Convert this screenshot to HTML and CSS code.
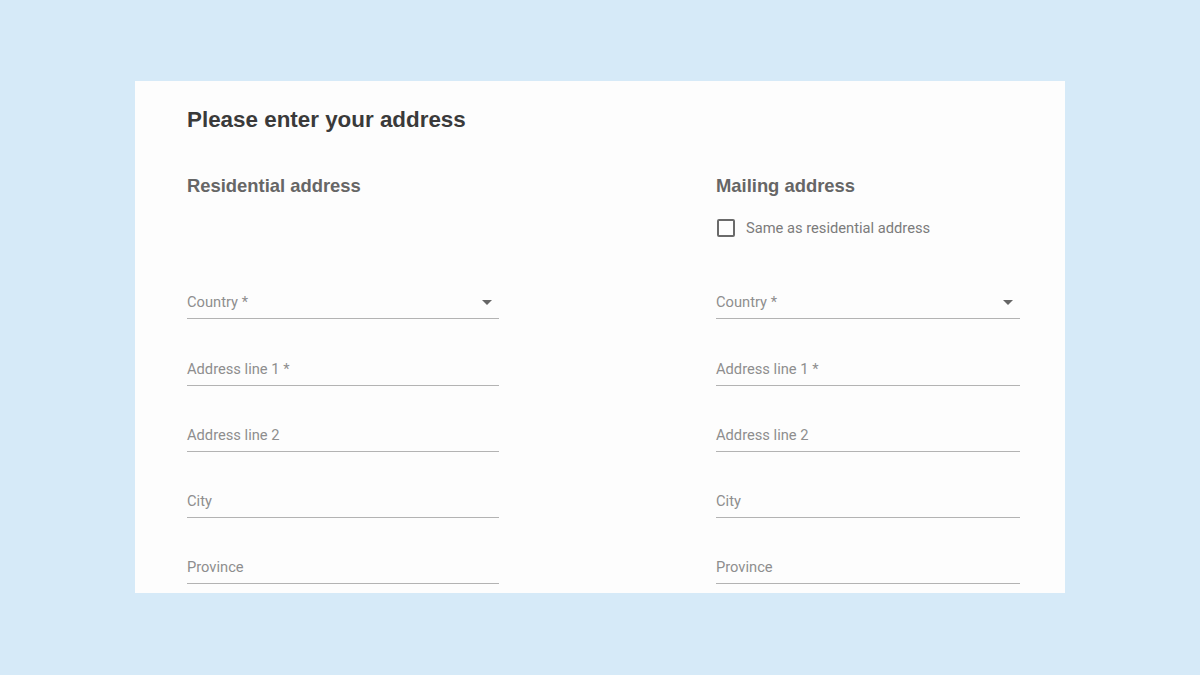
FILE: index.html
```html
<!DOCTYPE html>
<html lang="en">
<head>
  <meta charset="UTF-8">
  <title>Address</title>
  <meta name="viewport" content="width=device-width, initial-scale=1.0"/>
  <link rel="stylesheet" href="styles.css">
</head>
<body>

<!-- ADDRESS FORM -->
<div class="card">
  <h1>Please enter your address</h1>

  <div class="columns">
    <!-- RESIDENTIAL -->
    <div class="col col-left">
      <div class="col-head">
        <h2>Residential address</h2>
      </div>
      <div class="field select"><span>Country *</span><i class="arrow"></i></div>
      <div class="field"><span>Address line 1 *</span></div>
      <div class="field"><span>Address line 2</span></div>
      <div class="field"><span>City</span></div>
      <div class="field"><span>Province</span></div>
    </div>

    <!-- MAILING -->
    <div class="col col-right">
      <div class="col-head">
        <h2>Mailing address</h2>
        <label class="check"><span class="box"></span>Same as residential address</label>
      </div>
      <div class="field select"><span>Country *</span><i class="arrow"></i></div>
      <div class="field"><span>Address line 1 *</span></div>
      <div class="field"><span>Address line 2</span></div>
      <div class="field"><span>City</span></div>
      <div class="field"><span>Province</span></div>
    </div>
  </div>
</div>

</body>
</html>
```

FILE: styles.css
```css
body {
  margin: 0;
  padding: 81px 0 0;
  background: #d6eaf8;
  font-family: "Liberation Sans", Arial, sans-serif;
}

.card {
  width: 930px;
  height: 512px;
  margin-left: 135px;
  box-sizing: border-box;
  padding: 26px 0 0 52px;
  background: #fdfdfd;
  overflow: hidden;
}

h1 {
  margin: 0;
  font-size: 22.4px;
  line-height: 26px;
  font-weight: bold;
  color: #3a3a3a;
}

.columns {
  display: grid;
  grid-template-columns: 312px 304px;
  column-gap: 217px;
  margin-top: 42px;
}

.col-head {
  height: 78px;
}

h2 {
  margin: 0;
  font-size: 18.4px;
  line-height: 22px;
  font-weight: bold;
  color: #666;
}

.check {
  display: flex;
  align-items: center;
  margin-top: 22px;
  font-family: Roboto, sans-serif;
  font-size: 14.7px;
  color: #7b7b7b;
}

.check .box {
  width: 18px;
  height: 18px;
  box-sizing: border-box;
  border: 2px solid #6a6a6a;
  border-radius: 2px;
  margin: 0 11px 0 1px;
}

.field {
  height: 66.3px;
  box-sizing: border-box;
  border-bottom: 1px solid #b3b3b3;
  display: flex;
  align-items: flex-end;
  justify-content: space-between;
  padding-bottom: 7px;
  font-family: Roboto, sans-serif;
  font-size: 14.7px;
  line-height: 18px;
  color: #8e8e8e;
}

.field:first-of-type {
  height: 65px;
}

.arrow {
  width: 0;
  height: 0;
  border-left: 5px solid transparent;
  border-right: 5px solid transparent;
  border-top: 5px solid #666;
  margin: 0 7px 6px 0;
}
```
